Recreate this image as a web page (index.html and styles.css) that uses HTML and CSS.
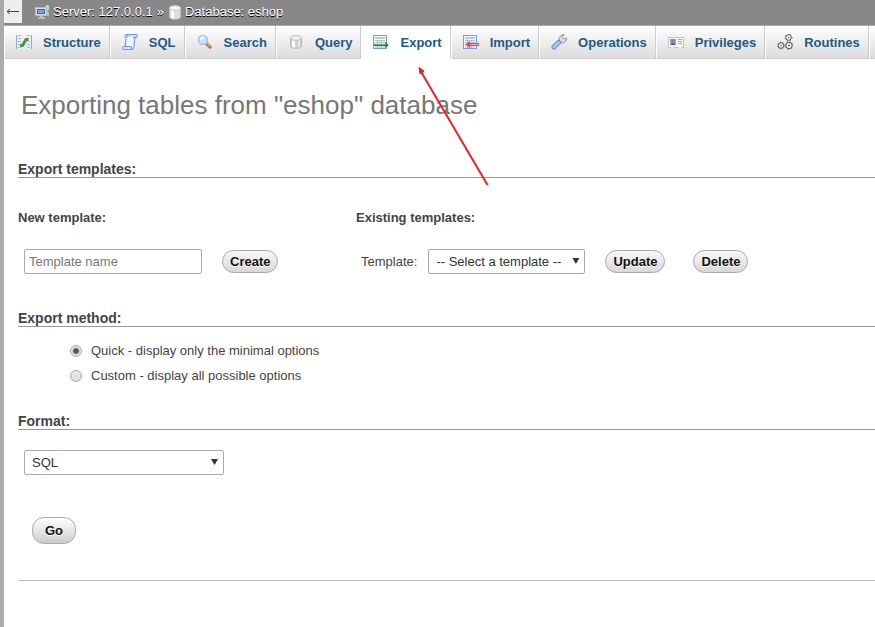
FILE: index.html
```html
<!DOCTYPE html>
<html lang="en">
<head>
<meta charset="utf-8">
<title>eshop export</title>
<link rel="stylesheet" href="styles.css">
</head>
<body>
<header class="serverbar">
  <button class="collapse" type="button" aria-label="Back"><svg width="14" height="9" viewBox="0 0 14 9"><path d="M1 4.500H13M4 2L1 4.500 4 7" fill="none" stroke="#444"/></svg></button>
  <nav class="crumbs">
    <a href="#server" class="crumb"><svg class="icon" viewBox="0 0 16 16"><path d="M10 .5h4.500v12H10z" fill="#bbb" stroke="#888"/><path d="M11 3h3M11 5h3" stroke="#eee"/><path d="M13 6h1.500v2H13z" fill="#3c3"/><rect x=".5" y="3.500" width="11" height="8" fill="#ddd" stroke="#bbb"/><rect x="2.500" y="5.500" width="7" height="4" fill="#7ea2dd" stroke="#3e66a8"/><path d="M5 12h3v1H5zM3 13h7v2H3z" fill="#bbb"/></svg><span>Server: 127.0.0.1</span></a>
    <span class="sep">»</span>
    <a href="#database" class="crumb"><svg class="icon" viewBox="0 0 16 16"><path d="M2.500 4v9c0 3 11 3 11 0V4z" fill="#ddd" stroke="#bbb"/><path d="M4 6h3v9l-3-1z" fill="#fff"/><ellipse cx="8" cy="4" rx="5.500" ry="2.300" fill="#f8f8f8" stroke="#ccc"/></svg><span>Database: eshop</span></a>
  </nav>
</header>
<nav class="tabs">
  <a class="tab" href="#structure"><svg class="icon" viewBox="0 0 16 16"><path d="M0 1h6v14H0zM11 1h5v14h-5z" fill="#e8effa"/><path d="M.5 1v14M15.500 1v14" stroke="#8fabdc"/><path d="M2 1.500h3M2 4.500h3M2 7.500h3M2 10.500h2M2 13.500h3M11 1.500h3M12 7.500h2M11 10.500h3M11 13.500h3" stroke="#a5bde2"/><path d="M4 11.500h2.500l3.500-6h2.500" fill="none" stroke="#4b9146" stroke-width="3" stroke-linejoin="round"/></svg><span>Structure</span></a>
  <a class="tab" href="#sql"><svg class="icon" viewBox="0 0 16 16"><path d="M4 .5h11c1 1 .5 3-1 3h-1l-1 9c0 2-1 3-2 3H1.500c-1.500 0-1-3 0-3H3l1-8C2.500 4 2.500 1 4 .5z" fill="#d5e4fa" stroke="#7097d9"/><path d="M5.500 3h6l-1 9h-6z" fill="#f2f7ff"/><path d="M4 .5c1.500 0 1.500 2 .5 3.500M2 12.500h7c1 0 .5 3 1.500 3M13 3.500h-2" fill="none" stroke="#7097d9"/></svg><span>SQL</span></a>
  <a class="tab" href="#search"><svg class="icon" viewBox="0 0 16 16"><path d="M9 9l4 4" stroke="#a57b50" stroke-width="3.500" stroke-linecap="round"/><path d="M10 9l3 3" stroke="#e5ad62" stroke-width="1.500" stroke-linecap="round"/><circle cx="6" cy="6" r="4.500" fill="#cfe2fb" stroke="#a4bfe9" stroke-width="1.500"/><path d="M4 6c0-2 1-3 3-3" fill="none" stroke="#fff" stroke-width="1.500"/></svg><span>Search</span></a>
  <a class="tab" href="#query"><svg class="icon" viewBox="0 0 16 16"><path d="M2.500 4v8c0 3 11 3 11 0V4z" fill="#d2d2d2" stroke="#b5b5b5"/><path d="M4 6h3v8l-3-1z" fill="#fafafa"/><path d="M10 6h2v7l-2 1z" fill="#e6e6e6"/><ellipse cx="8" cy="4" rx="5.500" ry="2.300" fill="#f4f4f4" stroke="#bbb"/></svg><span>Query</span></a>
  <a class="tab active" href="#export" aria-current="page"><svg class="icon" viewBox="0 0 16 16"><rect x=".5" y="1.500" width="13" height="13" fill="#f5f9ff" stroke="#789bd2"/><path d="M2 3h10v2H2z" fill="#b6d99b"/><path d="M2 6.500h10M2 8.500h10M2 13h10M4.500 6v8M8.500 6v8" stroke="#a9c1e4"/><path d="M1 10h11V8l4 3-4 3v-2H1z" fill="#2c852b"/><path d="M2 10.500h11" stroke="#69b35e"/></svg><span>Export</span></a>
  <a class="tab" href="#import"><svg class="icon" viewBox="0 0 16 16"><rect x=".5" y="1.500" width="13" height="13" fill="#f5f9ff" stroke="#789bd2"/><path d="M2 3h10v2H2z" fill="#b8cbe7"/><path d="M2 6.500h10M2 8.500h10M2 13h10M4.500 6v8M8.500 6v8" stroke="#a9c1e4"/><path d="M16 9H7V7l-5 3.500L7 14v-2h9z" fill="#ed4a3e"/><path d="M8 10.500h7" stroke="#ffb0a8"/></svg><span>Import</span></a>
  <a class="tab" href="#operations"><svg class="icon" viewBox="0 0 16 16"><path d="M8 8V4c1-2 3-3.500 5-3.500L11 3.500l1.500 1.500 3-1c.5 3-1.500 5-5 5z" fill="#ddd" stroke="#929292"/><path d="M3 13l4.500-4.500" stroke="#668bd4" stroke-width="5" stroke-linecap="round"/><path d="M3 13l4.500-4.500" stroke="#a9c4fa" stroke-width="3" stroke-linecap="round"/></svg><span>Operations</span></a>
  <a class="tab" href="#privileges"><svg class="icon" viewBox="0 0 16 16"><rect x=".5" y="3.500" width="15" height="10" fill="#f7f7f7" stroke="#c5c5c5"/><rect x="2" y="5" width="6" height="6" fill="#78a6e7"/><circle cx="5" cy="7" r="1.700" fill="#b77b43"/><path d="M3 11c0-3 4-3 4 0z" fill="#3768b3"/><path d="M10 5.500h4M10 7.500h4M10 9.500h4" stroke="#aaa"/><path d="M3 13.500h2M11 13.500h2" stroke="#fff"/></svg><span>Privileges</span></a>
  <a class="tab" href="#routines"><svg class="icon" viewBox="0 0 16 16"><g fill="#eee" stroke="#555"><circle cx="11.500" cy="3.500" r="2.800"/><circle cx="4" cy="11.500" r="2.800"/><circle cx="12" cy="11.500" r="3.200"/></g><g fill="none" stroke="#555" stroke-dasharray="1 2"><circle cx="11.500" cy="3.500" r="3.500"/><circle cx="4" cy="11.500" r="3.500"/><circle cx="12" cy="11.500" r="3.800"/></g><path d="M11 3h1v1h-1zM3.500 11h1v1h-1zM11 11h2v1h-2z" fill="#444"/></svg><span>Routines</span></a>
  <span class="tab rest"></span>
</nav>
<main class="content">
  <h1>Exporting tables from "eshop" database</h1>
  <form>
    <section class="templates">
      <h2>Export templates:</h2>
      <div class="columns">
        <div>
          <h3>New template:</h3>
          <div class="row">
            <input class="field" type="text" placeholder="Template name" aria-label="Template name">
            <button class="btn" type="button">Create</button>
          </div>
        </div>
        <div>
          <h3>Existing templates:</h3>
          <div class="row existing">
            <label for="template">Template:</label>
            <span class="select"><select id="template"><option>-- Select a template --</option></select></span>
            <button class="btn" type="button">Update</button>
            <button class="btn" type="button">Delete</button>
          </div>
        </div>
      </div>
    </section>
    <section class="method">
      <h2>Export method:</h2>
      <div class="options">
        <div class="option"><input type="radio" name="method" id="quick" checked><label for="quick">Quick - display only the minimal options</label></div>
        <div class="option"><input type="radio" name="method" id="custom"><label for="custom">Custom - display all possible options</label></div>
      </div>
    </section>
    <section class="format">
      <h2 id="format-title">Format:</h2>
      <span class="select wide"><select aria-labelledby="format-title"><option>SQL</option></select></span>
    </section>
    <button class="btn go" type="submit">Go</button>
  </form>
  <hr>
</main>
<svg class="pointer" width="72" height="122" viewBox="0 0 72 122" aria-hidden="true"><path d="M6 4L73.500 119" stroke="#ed2024" stroke-width="2"/><path d="M5 1.500l5 3.500-4 3z" fill="#ed2024" stroke="#ed2024"/></svg>
</body>
</html>
```
FILE: styles.css
```css
* { box-sizing: border-box; }

body {
  position: relative;
  margin: 0;
  min-height: 100vh;
  border-left: 4px solid #aaa;
  background: #fff;
  color: #444;
  font: 13px/16px "Liberation Sans", Arial, sans-serif;
  overflow-x: hidden;
}

body::before {
  content: "";
  position: absolute;
  top: 0;
  bottom: 0;
  left: -4px;
  width: 1px;
  background: #ddd;
}

button, input, select { font: inherit; }
a { color: inherit; text-decoration: none; }
.icon { width: 16px; height: 16px; flex: none; }

.serverbar {
  display: flex;
  align-items: flex-start;
  height: 26px;
  background: #888;
  border-bottom: 1px solid #aaa;
}

.collapse {
  display: flex;
  align-items: center;
  justify-content: center;
  width: 18px;
  height: 23px;
  padding: 0;
  border: 0;
  background: #eee;
}

.crumbs {
  display: flex;
  align-items: center;
  height: 24px;
  margin-left: 13px;
  color: #fff;
  text-shadow: 0 1px 0 #000;
}

.crumb { display: flex; gap: 2px; }
.crumb span { white-space: nowrap; }
.sep { margin: 0 3px 0 4px; }

.tabs {
  display: flex;
  height: 33px;
  overflow: hidden;
}

.tab {
  display: flex;
  flex: none;
  align-items: center;
  gap: 11px;
  padding: 0 8px 0 11px;
  border-left: 1px solid #fff;
  border-right: 1px solid #ccc;
  border-bottom: 1px solid #ccc;
  background: linear-gradient(#fff, #dcdcdc);
  color: #235a81;
  font-weight: bold;
}

.tab span { padding-top: 1px; }

.tab.active {
  background: #fff;
  border-bottom-color: #fff;
}

.tab.rest {
  flex: 1 0 0;
  padding: 0;
  border-right: 0;
}

.content { padding-left: 14px; }

h1, h2, h3 { margin: 0; }

h1 {
  margin: 30px 3px 40px;
  color: #777;
  font-size: 26px;
  line-height: 32px;
  font-weight: normal;
}

h2 {
  border-bottom: 1px solid #999;
  font-size: 14px;
  line-height: 16px;
}

h3 { font-size: 13px; }

.columns {
  display: grid;
  grid-template-columns: 338px 1fr;
  margin-top: 32px;
}

.row {
  display: flex;
  align-items: center;
  gap: 20px;
  margin: 23px 0 0 6px;
}

.existing { gap: 28px; margin-left: 5px; }
.existing label { margin-right: -17px; }
.existing .select { margin-right: -8px; }

.field {
  width: 178px;
  height: 25px;
  padding: 0 4px;
  border: 1px solid #aaa;
  border-radius: 2px;
}

.field::placeholder { color: #777; }

.btn {
  height: 23px;
  padding: 0 7px;
  border: 1px solid #aaa;
  border-radius: 12px;
  background: linear-gradient(#f8f8f8, #d8d8d8);
  color: #111;
  font-weight: bold;
  text-shadow: 0 1px 0 #fff;
}

.select {
  position: relative;
  display: block;
  width: 157px;
}

.select::after {
  content: "";
  position: absolute;
  top: 9px;
  right: 6px;
  width: 7px;
  height: 6px;
  background: #333;
  clip-path: polygon(0 0, 100% 0, 50% 100%);
  pointer-events: none;
}

.select select {
  display: block;
  appearance: none;
  width: 100%;
  height: 25px;
  padding: 0 7px;
  border: 1px solid #aaa;
  border-radius: 2px;
  background: #fff;
  color: #333;
}

.select.wide { width: 200px; }

.method { margin-top: 36px; }

.options {
  display: grid;
  gap: 9px;
  margin: 16px 0 0 52px;
}

.option {
  display: flex;
  align-items: center;
  gap: 9px;
}

.option input {
  appearance: none;
  width: 12px;
  height: 12px;
  margin: 0;
  border: 1px solid #aaa;
  border-radius: 50%;
  background: linear-gradient(#e8e8e8, #ddd);
}

.option input:checked {
  background: radial-gradient(circle, #555 0 2px, #e8e8e8 4px);
}

.format { margin-top: 29px; }
.format .select { margin: 20px 0 0 6px; }

.go {
  display: block;
  height: 27px;
  margin: 42px 0 0 14px;
  padding: 0 12px;
  border-radius: 12px;
  background: linear-gradient(#fff, #ccc);
}

hr {
  margin: 36px 0 0;
  border: 0;
  border-top: 1px solid #bbb;
}

.pointer {
  position: absolute;
  top: 66px;
  left: 410px;
  overflow: visible;
  pointer-events: none;
}
```
